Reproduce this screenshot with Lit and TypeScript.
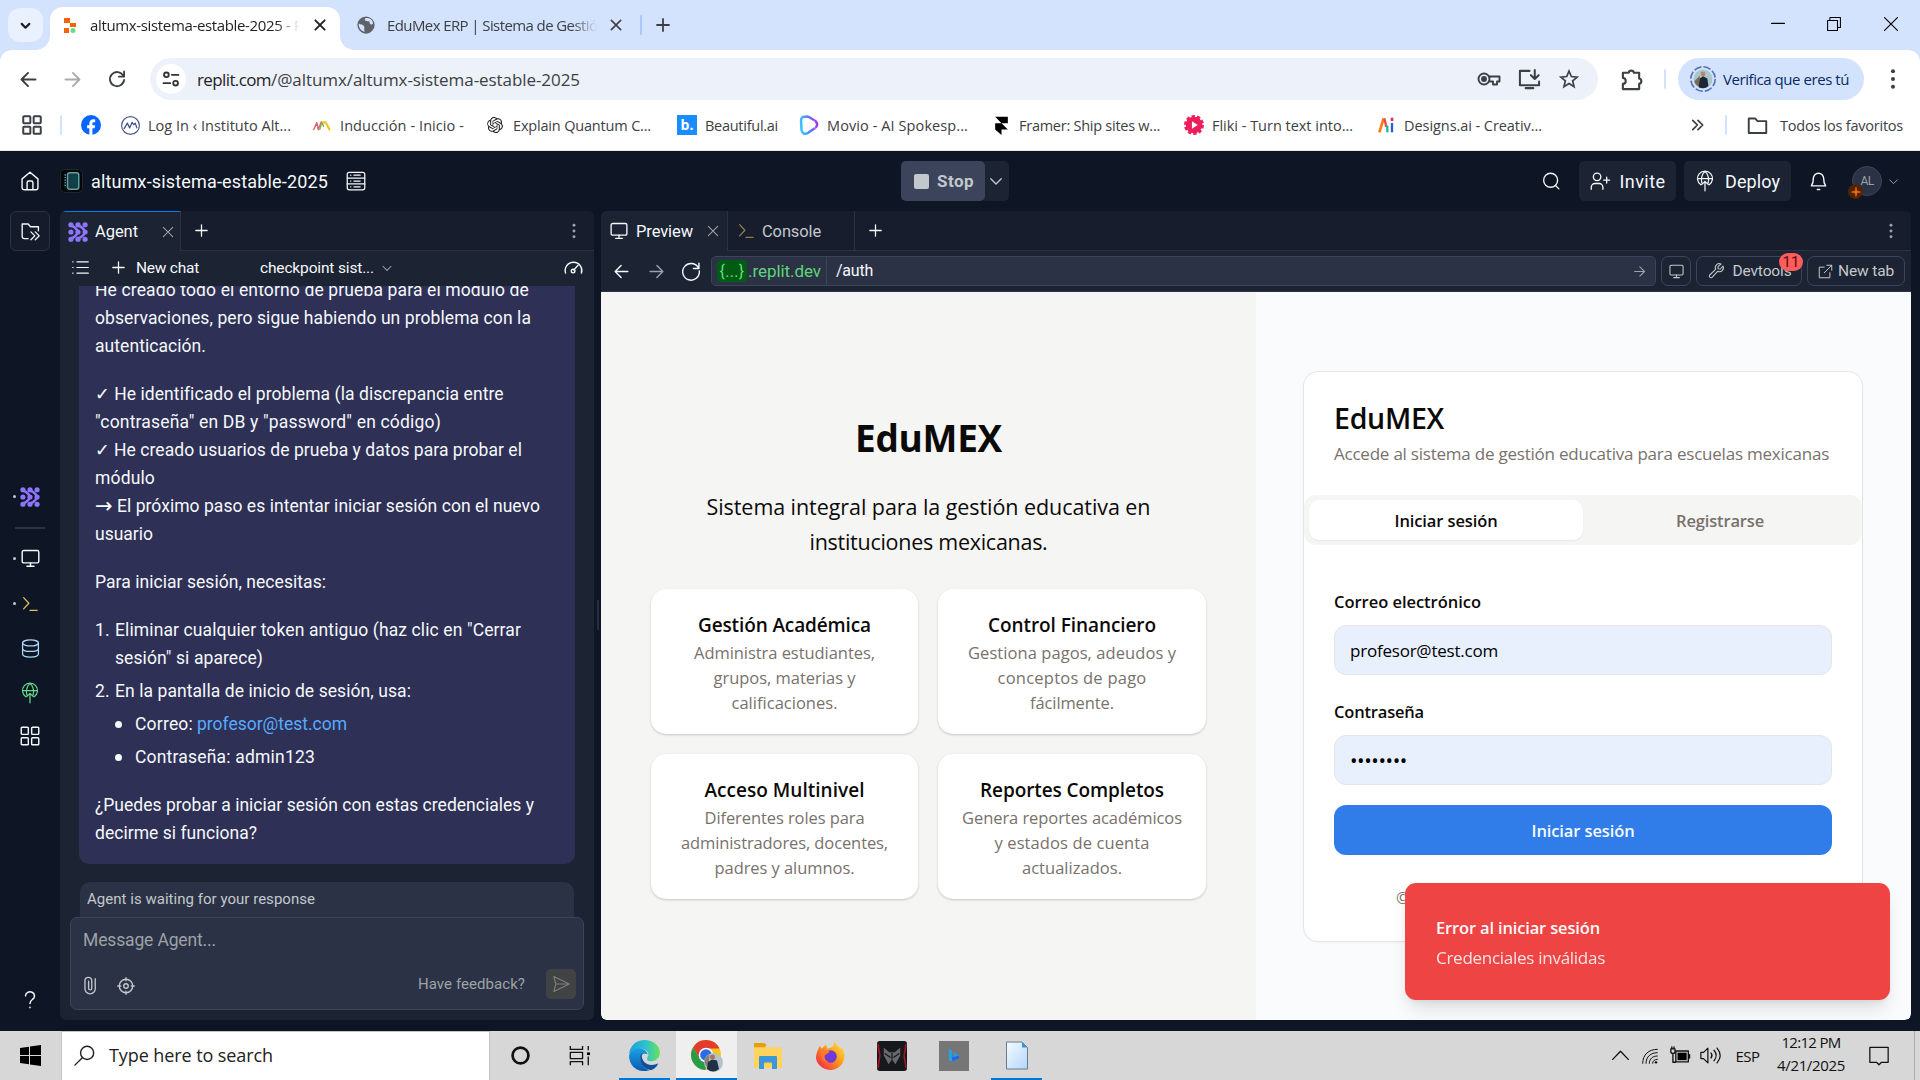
import { LitElement, html, css, svg, TemplateResult, SVGTemplateResult } from "lit";
import { customElement } from "lit/decorators.js";
import { styleMap } from "lit/directives/style-map.js";

/* ---------- helpers ---------- */

/** Single line of text whose tracking is adjusted to a set measure. */
const t = (text: string, w: number, cls = "") =>
  html`<span class="fit ${cls}" data-w=${w} style=${styleMap({ width: w + "px" })}><span class="run">${text}</span></span>`;

const ic = (size: number, body: SVGTemplateResult, cls = "", sw = 1.5, box = 24) =>
  html`<svg class="ic ${cls}" width=${size} height=${size} viewBox="0 0 ${box} ${box}" fill="none"
    stroke="currentColor" stroke-width=${sw} stroke-linecap="round" stroke-linejoin="round">${body}</svg>`;

class Fitted extends LitElement {
  updated() {
    this.renderRoot.querySelectorAll<HTMLElement>(".fit").forEach((el) => {
      const run = el.firstElementChild as HTMLElement;
      run.style.letterSpacing = "0px";
      const n = Math.max(1, (run.textContent || "").length);
      const diff = Number(el.dataset.w) - run.getBoundingClientRect().width;
      run.style.letterSpacing = (diff / n).toFixed(3) + "px";
    });
  }
}

const base = css`
  * { box-sizing: border-box; }
  :host { display: block; }
  .ic { display: block; flex: none; overflow: visible; }
  .fit { display: inline-block; white-space: pre; flex: none; }
  .run { display: inline-block; }
  .c { display: flex; align-items: center; justify-content: center; }
`;

/* ---------- shared glyphs ---------- */
const P = {
  down: svg`<path d="M5 9l7 7 7-7"/>`,
  x: svg`<path d="M5 5l14 14M19 5L5 19"/>`,
  plus: svg`<path d="M12 4v16M4 12h16"/>`,
  back: svg`<path d="M20 12H4M11.500 4.500L4 12l7.500 7.500"/>`,
  fwd: svg`<path d="M4 12h16M12.500 4.500L20 12l-7.500 7.500"/>`,
  dots: svg`<g fill="currentColor" stroke="none"><circle cx="12" cy="3.500" r="2.200"/><circle cx="12" cy="12" r="2.200"/><circle cx="12" cy="20.500" r="2.200"/></g>`,
  monitor: svg`<rect x="1.500" y="2" width="21" height="15.500" rx="2"/><path d="M12 17.500v4M7.500 21.800h9"/>`,
  prompt: svg`<path d="M3.500 3.500l7 7.500-7 7.500M12 20.500H21.500"/>`,
  grid: svg`<rect x="1.500" y="1.500" width="8.500" height="8.500" rx="1"/><rect x="14" y="1.500" width="8.500" height="8.500" rx="1"/><rect x="1.500" y="14" width="8.500" height="8.500" rx="1"/><rect x="14" y="14" width="8.500" height="8.500" rx="1"/>`,
  deploy: svg`<path d="M7 16.500a9 9 0 1 1 10 0"/><path d="M3 9h18M8.300 14.500C6.800 9 8.500 3 12 .5c3.500 2.500 5.200 8.500 3.700 14M12 23.800V12.500M8 16.300l4-3.800 4 3.800"/>`,
  agent: svg`<g fill="currentColor" stroke="none"><circle cx="3.500" cy="3.300" r="3.100"/><circle cx="12" cy="3.300" r="3.100"/><circle cx="20.500" cy="3.300" r="3.100"/><circle cx="3.500" cy="12" r="3.100"/><circle cx="12" cy="12" r="3.100"/><circle cx="20.500" cy="12" r="3.100"/><circle cx="3.500" cy="20.700" r="3.100"/><circle cx="12" cy="20.700" r="3.100"/><circle cx="20.500" cy="20.700" r="3.100"/></g><path d="M4 4.500Q9.500 6 12 12Q9.500 18 4 19.500M12.500 4.500Q18 6 20.500 12Q18 18 12.500 19.500" stroke-width="3"/>`,
};

/* ---------- browser chrome ---------- */
const knot = svg`<path fill="#222" stroke="none" d="M22.2819 9.8211a5.9847 5.9847 0 0 0-.5157-4.9108 6.0462 6.0462 0 0 0-6.5098-2.9A6.0651 6.0651 0 0 0 4.9807 4.1818a5.9847 5.9847 0 0 0-3.9977 2.9 6.0462 6.0462 0 0 0 .7427 7.0966 5.98 5.98 0 0 0 .511 4.9107 6.051 6.051 0 0 0 6.5146 2.9001A5.9847 5.9847 0 0 0 13.2599 24a6.0557 6.0557 0 0 0 5.7718-4.2058 5.9894 5.9894 0 0 0 3.9977-2.9001 6.0557 6.0557 0 0 0-.7475-7.0729zm-9.022 12.6081a4.4755 4.4755 0 0 1-2.8764-1.0408l.1419-.0804 4.7783-2.7582a.7948.7948 0 0 0 .3927-.6813v-6.7369l2.02 1.1686a.071.071 0 0 1 .038.052v5.5826a4.504 4.504 0 0 1-4.4945 4.4944zm-9.6607-4.1254a4.4708 4.4708 0 0 1-.5346-3.0137l.142.0852 4.783 2.7582a.7712.7712 0 0 0 .7806 0l5.8428-3.3685v2.3324a.0804.0804 0 0 1-.0332.0615L9.74 19.9502a4.4992 4.4992 0 0 1-6.1408-1.6464zM2.3408 7.8956a4.485 4.485 0 0 1 2.3655-1.9728V11.6a.7664.7664 0 0 0 .3879.6765l5.8144 3.3543-2.0201 1.1685a.0757.0757 0 0 1-.071 0l-4.8303-2.7865A4.504 4.504 0 0 1 2.3408 7.872zm16.5963 3.8558L13.1038 8.364 15.1192 7.2a.0757.0757 0 0 1 .071 0l4.8303 2.7913a4.4944 4.4944 0 0 1-.6765 8.1042v-5.6772a.79.79 0 0 0-.407-.667zm2.0107-3.0231l-.142-.0852-4.7735-2.7818a.7759.7759 0 0 0-.7854 0L9.409 9.2297V6.8974a.0662.0662 0 0 1 .0284-.0615l4.8303-2.7866a4.4992 4.4992 0 0 1 6.6802 4.66zM8.3065 12.863l-2.02-1.1638a.0804.0804 0 0 1-.038-.0567V6.0742a4.4992 4.4992 0 0 1 7.3757-3.4537l-.142.0805L8.704 5.459a.7948.7948 0 0 0-.3927.6813zm1.0976-2.3654l2.602-1.4998 2.6069 1.4998v2.9994l-2.5974 1.4997-2.6067-1.4997Z"/>`;

const bookmarks: { label: string; text: number; cell: number; icon: TemplateResult }[] = [
  { label: "Log In ‹ Instituto Alt...", text: 143, cell: 192, icon: ic(19, svg`<circle cx="12" cy="12" r="11.200" stroke="#4a5a94"/><path d="M4 16l4-7 3 6 3-7 2 3 2-2 2 6" stroke="#3a4a84"/>`) },
  { label: "Inducción - Inicio -", text: 124, cell: 173, icon: ic(18, svg`<path d="M1 18l4-9 2 9 4-10" stroke="#d9627a" stroke-width="2"/><path d="M9 18l3-10 2 6" stroke="#8bb04a" stroke-width="1.800"/><path d="M14 8.500h3l5 9.500" stroke="#f0c419" stroke-width="2.800"/>`) },
  { label: "Explain Quantum C...", text: 138, cell: 192, icon: ic(16, knot) },
  { label: "Beautiful.ai", text: 73, cell: 122, icon: html`<span class="beauty">b.</span>` },
  { label: "Movio - AI Spokesp...", text: 141, cell: 192, icon: ic(20, svg`<defs><linearGradient id="mv" x1="0" x2="1" y1="0.600" y2="0.400"><stop offset="0" stop-color="#35c3ff"/><stop offset=".5" stop-color="#5a7cff"/><stop offset="1" stop-color="#a035f0"/></linearGradient></defs><path d="M8 2Q2 1.500 2.500 8L3 18q1.500 6 7 4l9-6q5-4 1-8.500L13 3Q10 1.500 8 2z" stroke="url(#mv)" stroke-width="3"/><path d="M5 4l2 4M18 7l1 9" stroke="#fff" stroke-width=".8"/>`) },
  { label: "Framer: Ship sites w...", text: 141, cell: 193, icon: ic(19, svg`<path d="M4 1h16v8h-8zM4 9h8l8 8H4zM4 17h8v7z" fill="#000" stroke="none"/>`) },
  { label: "Fliki - Turn text into...", text: 141, cell: 192, icon: ic(20, svg`<circle cx="12" cy="12" r="10" fill="#ec1e5c" stroke="none"/><circle cx="12" cy="12" r="10.600" stroke="#ec1e5c" stroke-width="2.800" stroke-linecap="butt" stroke-dasharray="4.100 2.560"/><path d="M9.500 7.500v9l7-4.500z" fill="#fff" stroke="none"/>`) },
  { label: "Designs.ai - Creativ...", text: 138, cell: 200, icon: ic(16, svg`<g stroke-linecap="butt"><path d="M2 23L8.500 2" stroke="#ff7a1a" stroke-width="4"/><path d="M9.500 2l3 13" stroke="#ef4a3c" stroke-width="3.500"/><path d="M14 13v10" stroke="#22b5a0" stroke-width="3.500"/><path d="M21 9v14" stroke="#2b5fd0" stroke-width="3.500"/><path d="M21 1v5" stroke="#e0325e" stroke-width="4"/></g>`) },
];

@customElement("browser-chrome")
class BrowserChrome extends Fitted {
  static styles = [base, css`
    :host { font-family: "Open Sans", "Noto Sans", sans-serif; color: #3c4043; background: #fff; height: 150px; }
    .strip { height: 50px; background: #d3e3fd; display: flex; padding-left: 8px; }
    .find { width: 35px; height: 34px; margin: 8px 7px 0 0; border-radius: 12px; background: #e9f0fe; color: #1f1f1f; }
    .tab { width: 290px; margin-top: 7px; height: 43px; background: #fff; border-radius: 13px 13px 0 0; display: flex; align-items: center; padding: 0 12px 7px 13px; font-size: 15px; color: #1f1f1f; position: relative; }
    .tab::before, .tab::after { content: ""; position: absolute; bottom: 0; width: 14px; height: 14px; }
    .tab::before { left: -14px; background: radial-gradient(circle at 0 0, transparent 13.500px, #fff 14px); }
    .tab::after { right: -14px; background: radial-gradient(circle at 100% 0, transparent 13.500px, #fff 14px); }
    .tab .name { margin-left: 13px; flex: 1; overflow: hidden; white-space: nowrap; mask-image: linear-gradient(90deg, #000 186px, transparent 210px); }
    .tab2 { width: 290px; height: 50px; display: flex; align-items: center; padding-left: 17px; font-size: 15px; color: #3c4043; }
    .tab2 .name { width: 211px; margin: 0 10px 0 12px; overflow: hidden; white-space: nowrap; mask-image: linear-gradient(90deg, #000 185px, transparent 210px); }
    .bar { width: 2px; height: 20px; background: #a8c7fa; align-self: center; border-radius: 1px; margin-left: 10px; }
    .bar.light { background: #d3e3fd; margin: 0; }
    .add { width: 42px; }
    .win { margin-left: auto; display: grid; grid-template-columns: 57px 56px 57px; color: #000; height: 48px; padding-right: 1px; }
    .tools { height: 58px; display: grid; grid-template-columns: 44px 44px 56px 1448px 66px 14px 186px 57px; padding: 0 0 0 6px; background: #fff; border-radius: 12px 12px 0 0; align-items: center; }
    .wrap { background: #d3e3fd; }
    .reload { padding-right: 10px; }
    .dim { color: #a9abae; }
    .addr { height: 42px; border-radius: 21px; background: #edf1fa; display: flex; align-items: center; padding-left: 6px; font-size: 17px; }
    .site { width: 30px; height: 30px; border-radius: 50%; background: #fff; margin-right: 11px; color: #333; }
    .dark { color: #1f1f1f; }
    .addr .acts { margin-left: auto; display: grid; grid-template-columns: 41px 40px 40px; margin-right: 9px; }
    .pill { height: 42px; border-radius: 21px; background: #d3e3fd; display: flex; align-items: center; padding-left: 12px; color: #0a2a66; font-size: 15px; }
    .pill .fit { margin-left: 7px; }
    .marks { height: 34px; display: flex; align-items: center; font-size: 14.500px; padding: 0 17px 0 20px; }
    .marks .apps { width: 24px; margin-right: 16px; }
    .fb { margin: 0 19px 0 19px; }
    .mark { display: flex; align-items: center; flex: none; }
    .mark .slot { width: 20px; margin-right: 8px; }
    .beauty { width: 20px; height: 20px; background: #1a8cff; color: #fff; font-weight: 700; font-size: 14px; line-height: 19px; text-align: center; }
    .all { margin-left: auto; display: flex; align-items: center; }
    .all .bar { margin: 0 20px 0 20px; }
    .all .fit { margin-left: 12px; }
  `];
  render() {
    return html`
      <div class="strip">
        <div class="find c">${ic(13, P.down, "", 4)}</div>
        <div class="tab">
          <svg width="14" height="17" viewBox="0 0 14 17"><path fill="#f26207" d="M1 1h6v5H1zM7 6h6v4H7zM1 11h5v5H1z"/><circle cx="10" cy="13.500" r="2.500" fill="#6bd98a"/></svg>
          <span class="name">${t("altumx-sistema-estable-2025 - R", 213)}</span>
          ${ic(16, P.x, "", 2.8)}
        </div>
        <div class="tab2">
          ${ic(18, svg`<circle cx="12" cy="12" r="11.500" fill="#5f6368" stroke="none"/><path d="M2.500 10c3 2 6 1 7 4s-1 4 1 7c-4 0-9-5-8-11zM11 3c-2 3 1 4 4 4s1 3 3 4 4 0 3-3-4-6-10-5z" fill="#d3e3fd" stroke="none"/>`)}
          <span class="name">${t("EduMex ERP | Sistema de Gestión", 219)}</span>
          ${ic(16, P.x, "", 2.4)}
        </div>
        <div class="bar"></div>
        <div class="add c">${ic(18, P.plus, "", 2.4)}</div>
        <div class="win">
          <div class="c">${ic(14, svg`<path d="M1 11h22"/>`, "", 2)}</div>
          <div class="c">${ic(14, svg`<path d="M1 6h17v17H1zM5 6V1h18v17h-5"/>`, "", 1.8)}</div>
          <div class="c">${ic(14, svg`<path d="M1 1l22 22M23 1L1 23"/>`, "", 2)}</div>
        </div>
      </div>
      <div class="wrap"><div class="tools">
        <div class="c">${ic(21, P.back, "", 2.2)}</div>
        <div class="c dim">${ic(21, P.fwd, "", 2.2)}</div>
        <div class="c reload">${ic(20, svg`<path d="M19.500 8A8.500 8.500 0 1 0 20.500 13M20.500 3v6.200h-6.200"/>`, "", 2.2)}</div>
        <div class="addr">
          <div class="site c">${ic(20, svg`<circle cx="6.500" cy="7" r="2.800"/><path d="M13 7h8M3 17h8"/><circle cx="17.500" cy="17" r="2.800"/>`, "", 2.2)}</div>
          ${t("replit.com", 74, "dark")}${t("/@altumx/altumx-sistema-estable-2025", 309)}
          <div class="acts">
            <div class="c">${ic(24, svg`<circle cx="7" cy="12" r="5.500"/><circle cx="7" cy="12" r="2" fill="currentColor"/><path d="M12 9.500h10.500v5H20v3h-4v-3h-4"/>`, "", 1.9)}</div>
            <div class="c">${ic(23, svg`<path d="M12 3H2v15h20v-4M8 21h8M17.500 2v9M13.500 7.500l4 4 4-4"/>`, "", 2.1)}</div>
            <div class="c">${ic(20, svg`<path d="M12 2.500l2.800 6.600 7 .6-5.400 4.600 1.700 7L12 17.500l-6.100 3.800 1.700-7L2.200 9.700l7-.6z" stroke-linejoin="miter"/>`, "", 2)}</div>
          </div>
        </div>
        <div class="c">${ic(23, svg`<path d="M3 5h6a2.800 2.800 0 0 1 5.500 0H20v6a2.800 2.800 0 0 1 0 5.500V22H3v-5.500a3 3 0 0 0 0-6z"/>`, "", 2.2)}</div>
        <div class="bar light"></div>
        <div class="pill">
          ${ic(26, svg`<circle cx="12" cy="12" r="11.300" stroke="#5272b4" stroke-dasharray="7 1.880" stroke-linecap="butt"/><circle cx="12" cy="12" r="8.800" fill="#a9c6cf" stroke="none"/><path d="M4 14l5-5v10q-4-1-5-5z" fill="#776b55" stroke="none"/><path d="M8 19.500l1-8 3-2 4 2 1 7q-4 3.500-9 1z" fill="#1e2636" stroke="none"/><circle cx="12" cy="7.300" r="2.200" fill="#b98766" stroke="none"/>`)}
          ${t("Verifica que eres tú", 126)}
        </div>
        <div class="c">${ic(22, P.dots, "", 1)}</div>
      </div></div>
      <div class="marks">
        <div class="apps c">${ic(20, P.grid, "", 2.4)}</div>
        <div class="bar light"></div>
        <svg class="ic fb" width="20" height="20" viewBox="0 0 24 24"><circle cx="12" cy="12" r="12" fill="#0866ff"/><path d="M10 24v-8H7.300v-3.600H10v-1.800C10 7 11.700 5.200 15 5.200l2 .2v3.200h-1.500c-1.300 0-1.800.5-1.800 1.800v2H17l-.6 3.600h-2.700v8z" fill="#fff"/></svg>
        ${bookmarks.map((b) => html`<div class="mark" style=${styleMap({ width: b.cell + "px" })}><span class="slot c">${b.icon}</span>${t(b.label, b.text)}</div>`)}
        <div class="all">
          ${ic(14, svg`<path d="M3 4l8 8-8 8M12 4l8 8-8 8"/>`, "", 3)}
          <div class="bar light"></div>
          ${ic(21, svg`<path d="M2 4h7.500l2.500 3h10v13.500H2z"/>`, "", 2.2)}
          ${t("Todos los favoritos", 123)}
        </div>
      </div>`;
  }
}

/* ---------- IDE: agent panel ---------- */
@customElement("agent-panel")
class AgentPanel extends Fitted {
  static styles = [base, css`
    :host { width: 534px; height: 809px; background: #1c2333; border-radius: 6px; overflow: hidden; display: flex; flex-direction: column; color: #f5f9fc; font-family: Roboto, "Liberation Sans", "DejaVu Sans", sans-serif; }
    .tabs { height: 40px; display: grid; grid-template-columns: 121px 1fr 40px; background: #171d2d; flex: none; }
    .tab { border-top: 1.500px solid #0079f2; border-right: 1px solid #2b3245; background: #1c2333; display: flex; align-items: center; padding-left: 8px; font-size: 16.500px; }
    .tab .fit { margin: 0 22px 0 7px; }
    .rest { border-bottom: 1px solid #2b3245; display: flex; align-items: center; padding-left: 12px; }
    .muted { color: #9da2a6; }
    .purple { color: #8d75ff; }
    .sub { height: 35px; flex: none; display: grid; grid-template-columns: 40px 36px 64px 60px 114px 26px 1fr 40px; align-items: center; font-size: 15.500px; padding-bottom: 2px; }
    .sub .last { grid-column: 8; padding-right: 1px; }
    .sub .title { grid-column: 5; }
    .scroll { height: 578px; overflow: hidden; padding: 0 19px; flex: none; }
    .bubble { margin-top: -26px; background: #2f3055; border-radius: 0 0 10px 10px; padding: 16px 16px 17px; font-size: 17.500px; line-height: 28px; }
    .bubble div { height: 28px; }
    .gap { margin-top: 20px; }
    .gap5 { margin-top: 5px; }
    .row { display: flex; }
    .arrow { font-family: "DejaVu Sans", sans-serif; font-size: 21px; margin-right: 4px; }
    .in { padding-left: 20px; }
    .in2 { padding-left: 20px; display: flex; align-items: center; }
    .dot { width: 7px; height: 7px; border-radius: 50%; background: #f5f9fc; margin-right: 13px; }
    .num { width: 20px; }
    .link { color: #57abff; margin-left: 4px; }
    .status { margin: 18px 20px 0; height: 35px; border-radius: 10px 10px 0 0; background: #2b3245; padding: 5px 7px; font-size: 15px; line-height: 24px; color: #c2c8cc; }
    .box { margin: 0 10px; height: 93px; border: 1px solid #3c445c; border-radius: 7px; background: #2b3245; padding: 9px 7px 10px 12px; display: flex; flex-direction: column; justify-content: space-between; color: #9da2a6; }
    .ph { font-size: 17.500px; line-height: 26px; }
    .acts { display: flex; align-items: center; height: 30px; font-size: 15px; color: #c2c8cc; }
    .acts .fit { margin: 0 21px 0 auto; color: #9da2a6; }
    .acts .clip { margin: 3px 17px 0 -2px; }
    .acts .aim { margin-top: 3px; }
    .send { width: 30px; height: 30px; border-radius: 5px; background: #414244; color: #7d7d7f; }
  `];
  render() {
    return html`
      <div class="tabs">
        <div class="tab">${ic(20, P.agent, "purple")}${t("Agent", 43)}${ic(16, P.x, "muted", 1.6)}</div>
        <div class="rest">${ic(17, P.plus, "", 1.8)}</div>
        <div class="rest muted">${ic(16, P.dots)}</div>
      </div>
      <div class="sub">
        <div class="c">${ic(17, svg`<path d="M7 4h16M7 12h16M7 20h16M1 4h.5M1 12h.5M1 20h.5"/>`, "", 1.7)}</div>
        <div class="c">${ic(17, P.plus, "", 1.8)}</div>
        ${t("New chat", 63)}
        <div class="title">${t("checkpoint sist...", 114)}</div>
        <div class="c muted">${ic(14, P.down, "", 1.8)}</div>
        <div class="c last">${ic(19, svg`<path d="M2 19A10.500 10.500 0 1 1 22 19M12.500 15l5-5.500"/><circle cx="11.500" cy="16.500" r="2.300"/>`, "", 1.8)}</div>
      </div>
      <div class="scroll"><div class="bubble">
        <div>${t("He creado todo el entorno de prueba para el módulo de", 434)}</div>
        <div>${t("observaciones, pero sigue habiendo un problema con la", 436)}</div>
        <div>${t("autenticación.", 111)}</div>
        <div class="gap">${t("✓ He identificado el problema (la discrepancia entre", 408)}</div>
        <div>${t("\"contraseña\" en DB y \"password\" en código)", 346)}</div>
        <div>${t("✓ He creado usuarios de prueba y datos para probar el", 427)}</div>
        <div>${t("módulo", 60)}</div>
        <div class="row">${t("→", 18, "arrow")}${t("El próximo paso es intentar iniciar sesión con el nuevo", 423)}</div>
        <div>${t("usuario", 58)}</div>
        <div class="gap">${t("Para iniciar sesión, necesitas:", 231)}</div>
        <div class="gap row"><span class="num">${t("1.", 15)}</span>${t("Eliminar cualquier token antiguo (haz clic en \"Cerrar", 406)}</div>
        <div class="in">${t("sesión\" si aparece)", 148)}</div>
        <div class="gap5 row"><span class="num">${t("2.", 15)}</span>${t("En la pantalla de inicio de sesión, usa:", 296)}</div>
        <div class="gap5 in2"><span class="dot"></span>${t("Correo:", 58)}${t("profesor@test.com", 150, "link")}</div>
        <div class="gap5 in2"><span class="dot"></span>${t("Contraseña: admin123", 180)}</div>
        <div class="gap">${t("¿Puedes probar a iniciar sesión con estas credenciales y", 439)}</div>
        <div>${t("decirme si funciona?", 162)}</div>
      </div></div>
      <div class="status">${t("Agent is waiting for your response", 228)}</div>
      <div class="box">
        <div class="ph">${t("Message Agent...", 133)}</div>
        <div class="acts">
          ${ic(19, svg`<path d="M5 5v11a6.500 6.500 0 0 0 13 0V7M5 7V6a4.300 4.300 0 0 1 8.600 0V15.500a2 2 0 0 1-4 0V6.500M18 7V3.500"/>`, "clip", 1.7)}
          ${ic(18, svg`<circle cx="12" cy="12" r="9"/><circle cx="12" cy="12" r="3"/><path d="M12 1v4M12 19v4M1 12h4M19 12h4"/>`, "aim", 1.8)}
          ${t("Have feedback?", 107)}
          <div class="send c">${ic(18, svg`<path d="M2.500 2L23 12 2.500 22l2.500-10zM5 12h17"/>`)}</div>
        </div>
      </div>`;
  }
}

/* ---------- previewed app ---------- */
const features = [
  { title: ["Gestión Académica", 173], lines: [["Administra estudiantes,", 181], ["grupos, materias y", 142], ["calificaciones.", 106]] },
  { title: ["Control Financiero", 168], lines: [["Gestiona pagos, adeudos y", 208], ["conceptos de pago", 149], ["fácilmente.", 84]] },
  { title: ["Acceso Multinivel", 160], lines: [["Diferentes roles para", 160], ["administradores, docentes,", 207], ["padres y alumnos.", 140]] },
  { title: ["Reportes Completos", 184], lines: [["Genera reportes académicos", 220], ["y estados de cuenta", 155], ["actualizados.", 100]] },
] as { title: [string, number]; lines: [string, number][] }[];

@customElement("edumex-page")
class EdumexPage extends Fitted {
  static styles = [base, css`
    :host { height: 728px; display: grid; grid-template-columns: 655px 655px; font-family: "Open Sans", "Noto Sans", sans-serif; color: #0c0a09; position: relative; overflow: hidden; border-radius: 0 0 6px 6px; background: #fafbfc; }
    .hero { background: #f5f5f4; padding: 123px 50px 0; text-align: center; }
    h1 { margin: 0; font-size: 37px; line-height: 45px; font-weight: 700; }
    .lead { margin-top: 29px; font-size: 21.500px; line-height: 35px; }
    .lead div, .desc div { display: flex; justify-content: center; }
    .cards { margin-top: 30px; display: grid; grid-template-columns: 267px 268px; gap: 20px; }
    .card { height: 145px; background: #fff; border-radius: 15px; box-shadow: 0 1px 3px rgba(0,0,0,.1), 0 1px 2px rgba(0,0,0,.1); padding: 21px 0; }
    .name { font-size: 19px; line-height: 31px; height: 30px; font-weight: 600; }
    .desc { font-size: 16.500px; line-height: 25px; color: #78716c; }
    .side { padding: 79px 47px 0; }
    .login { width: 560px; height: 571px; background: #fff; border: 1px solid #e7e5e4; border-radius: 15px; box-shadow: 0 1px 2px rgba(0,0,0,.04); padding-top: 26px; }
    .pad { padding: 0 30px; }
    .brand { font-size: 28.500px; line-height: 40px; font-weight: 600; height: 40px; }
    .sub { font-size: 17px; line-height: 31px; height: 30px; color: #78716c; }
    .tabs { margin-top: 27px; height: 50px; border-radius: 12px; background: #f5f5f4; padding: 5px; display: grid; grid-template-columns: 1fr 1fr; font-size: 16.500px; font-weight: 600; color: #78716c; }
    .on { background: #fff; color: #0c0a09; border-radius: 10px; box-shadow: 0 1px 2px rgba(0,0,0,.06); }
    .label { font-size: 16.500px; font-weight: 600; line-height: 25px; height: 25px; }
    .first { margin-top: 44px; }
    .second { margin-top: 24px; }
    .input { margin-top: 11px; height: 50px; background: #e8f0fe; border: 1px solid #e7e5e4; border-radius: 12px; padding: 0 15px; display: flex; align-items: center; font-size: 17px; color: #000; }
    .pw { font-size: 20px; }
    .go { margin-top: 20px; height: 50px; border-radius: 12px; background: #307dea; color: #f5faff; font-size: 16.500px; font-weight: 600; }
    .foot { margin-top: 31px; padding-left: 92px; color: #78716c; font-size: 16px; line-height: 25px; white-space: nowrap; overflow: hidden; }
    .toast { position: absolute; left: 804px; top: 591px; width: 485px; height: 117px; border-radius: 11px; background: #ef4444; color: #fafafa; padding: 31px; box-shadow: 0 12px 19px -4px rgba(0,0,0,.12), 0 5px 8px -5px rgba(0,0,0,.1); font-size: 16.500px; line-height: 30px; }
    .tt { font-weight: 600; height: 29px; line-height: 28px; }
    .td { opacity: .88; height: 30px; font-size: 17px; }
  `];
  render() {
    return html`
      <section class="hero">
        <h1>${t("EduMEX", 147)}</h1>
        <div class="lead"><div>${t("Sistema integral para la gestión educativa en", 444)}</div><div>${t("instituciones mexicanas.", 238)}</div></div>
        <div class="cards">${features.map((f) => html`<div class="card">
          <div class="name">${t(f.title[0], f.title[1])}</div>
          <div class="desc">${f.lines.map((l) => html`<div>${t(l[0], l[1])}</div>`)}</div></div>`)}
        </div>
      </section>
      <section class="side"><div class="login">
        <div class="pad">
          <div class="brand">${t("EduMEX", 110)}</div>
          <div class="sub">${t("Accede al sistema de gestión educativa para escuelas mexicanas", 495)}</div>
        </div>
        <div class="tabs"><div class="on c">${t("Iniciar sesión", 103)}</div><div class="c">${t("Registrarse", 88)}</div></div>
        <div class="pad">
          <div class="label first">${t("Correo electrónico", 147)}</div>
          <div class="input">${t("profesor@test.com", 148)}</div>
          <div class="label second">${t("Contraseña", 90)}</div>
          <div class="input pw">${t("••••••••", 57)}</div>
          <div class="go c">${t("Iniciar sesión", 103)}</div>
        </div>
        <div class="foot">©</div>
      </div></section>
      <div class="toast"><div class="tt">${t("Error al iniciar sesión", 164)}</div><div class="td">${t("Credenciales inválidas", 169)}</div></div>`;
  }
}

@customElement("preview-panel")
class PreviewPanel extends Fitted {
  static styles = [base, css`
    :host { width: 1310px; height: 809px; background: #1c2333; border-radius: 6px; overflow: hidden; font-family: Roboto, "Liberation Sans", sans-serif; color: #f5f9fc; }
    .tabs { height: 40px; display: grid; grid-template-columns: 127px 127px 1fr 40px; background: #171d2d; font-size: 16.500px; }
    .tab { border-right: 1px solid #2b3245; display: flex; align-items: center; padding-left: 9px; }
    .tab.on { background: #1c2333; }
    .off { border-bottom: 1px solid #2b3245; color: #c2c8cc; padding-top: 1px; }
    .tab .fit { margin-left: 8px; }
    .off .fit { margin-left: 7px; }
    .tab .x { margin-left: 12px; color: #9da2a6; }
    .rest { border-bottom: 1px solid #2b3245; display: flex; align-items: center; padding-left: 12px; }
    .yellow { color: #8a7d4d; }
    .nav { height: 41px; border-bottom: 1px solid #2b3245; display: grid; grid-template-columns: 40px 30px 40px 945px 30px 106px 98px; align-items: center; font-size: 15.500px; }
    .muted { color: #9da2a6; }
    .url { height: 30px; border: 1px solid #3c445c; border-radius: 5px; background: #2b3245; display: flex; align-items: center; padding-left: 5px; }
    .chip { height: 22px; width: 30px; border-radius: 4px; background: #005c12; color: #6bd97f; font-size: 16px; }
    .green { color: #5fd478; margin: 0 5px 0 1px; font-size: 17px; }
    .path { border-left: 1px solid #3c445c; height: 28px; line-height: 27px; padding-left: 9px; font-size: 16px; }
    .url .ic { margin: 0 8px 0 auto; }
    .btn { height: 30px; border: 1px solid #3c445c; border-radius: 7px; color: #c2c8cc; margin-left: 5px; position: relative; }
    .b1 { width: 30px; } .b2 { width: 106px; margin-left: 10px; padding-left: 1px; } .b3 { width: 98px; margin-left: 15px; }
    .b2 > .fit { margin-left: 9px; } .b3 > .fit { margin-left: 5px; }
    .count { position: absolute; right: -2px; top: -4px; width: 24px; height: 18px; border-radius: 9px; background: #ff5c5c; color: #5a0b0b; font-size: 15px; line-height: 18px; display: flex; justify-content: center; }
  `];
  render() {
    return html`
      <div class="tabs">
        <div class="tab on">${ic(18, P.monitor, "", 1.8)}${t("Preview", 57)}${ic(16, P.x, "x", 1.6)}</div>
        <div class="tab off">${ic(18, P.prompt, "yellow", 1.8)}${t("Console", 59)}</div>
        <div class="rest">${ic(17, P.plus, "", 1.8)}</div>
        <div class="rest muted">${ic(16, P.dots)}</div>
      </div>
      <div class="nav">
        <div class="c">${ic(19, P.back, "", 1.8)}</div>
        <div class="c muted">${ic(19, P.fwd, "", 1.8)}</div>
        <div class="c">${ic(20, svg`<path d="M21 8.500A10 10 0 1 0 22 12M21.500 2.500V9H15"/>`, "", 1.7)}</div>
        <div class="url"><span class="chip c">${t("{...}", 25)}</span>${t(".replit.dev", 73, "green")}<span class="path">${t("/auth", 37)}</span>${ic(15, P.fwd, "muted", 1.7)}</div>
        <div class="btn b1 c">${ic(15, P.monitor, "", 1.7)}</div>
        <div class="btn b2 c">${ic(16, svg`<path d="M15 8.500l3.500.5 4-4.500a6 6 0 0 1-8 8L6 21.500a2.500 2.500 0 0 1-3.500-3.500L11.500 9.500a6 6 0 0 1 8-8L15 5.500z"/>`, "", 1.6)}${t("Devtools", 59)}<span class="count">${t("11", 17)}</span></div>
        <div class="btn b3 c">${ic(15, svg`<path d="M14 2h8v8M22 2L10 14M10 5H2v17h17v-8"/>`, "", 1.6)}${t("New tab", 56)}</div>
      </div>
      <edumex-page></edumex-page>`;
  }
}

/* ---------- IDE shell ---------- */
@customElement("ide-shell")
class IdeShell extends Fitted {
  static styles = [base, css`
    :host { height: 880px; background: #0e1525; border-top: 1px solid #e3e8e3; color: #f5f9fc; font-family: Roboto, "Liberation Sans", sans-serif; font-size: 18px; }
    .head { height: 60px; display: grid; grid-template-columns: 60px 23px 245px 56px 1fr auto; align-items: center; }
    .logo { width: 23px; height: 24px; background: #050708; border: 1px solid #22262c; border-radius: 5px; }
    .head .title { padding-left: 8px; }
    .stop { grid-column: 5; display: flex; height: 40px; margin-left: 517px; font-weight: 700; font-size: 17px; color: #c2c8cc; }
    .stop .main { width: 84px; background: #3c445c; border-radius: 5px; display: flex; align-items: center; padding-left: 13px; z-index: 1; }
    .sq { width: 15px; height: 15px; border-radius: 2px; background: #c2c8cc; margin-right: 8px; }
    .more { width: 28px; margin-left: -4px; padding-left: 2px; background: #1c2333; border-radius: 5px; }
    .right { grid-column: 6; display: grid; grid-template-columns: 56px 97px 8px 107px 54px 42px 33px; align-items: center; }
    .btn { height: 40px; border-radius: 5px; background: #1c2333; gap: 10px; }
    .b2 { grid-column: 4; }
    .av { width: 30px; height: 30px; border-radius: 50%; background: #2b3245; border: 1px solid #3c445c; color: #9da2a6; font-size: 12px; position: relative; margin-left: 7px; }
    .badge { position: absolute; left: -5px; bottom: -4px; width: 15px; height: 15px; border-radius: 50%; background: #4f2500; color: #ff6a13; }
    .muted { color: #9da2a6; }
    .body { display: flex; height: 809px; }
    .rail { width: 60px; display: flex; flex-direction: column; align-items: center; }
    .files { width: 40px; height: 40px; border: 1px solid #2b3245; border-radius: 6px; background: #151b2b; }
    .item { height: 45px; width: 60px; position: relative; }
    .item.on::before { content: ""; position: absolute; left: 13px; top: 21px; width: 3px; height: 3px; border-radius: 50%; background: #c2c8cc; }
    .agent { margin-top: 223px; color: #8d75ff; }
    .line { width: 30px; height: 2px; background: #2b3245; margin: 8px 0 7px; }
    .yellow { color: #d9c35c; } .blue { color: #aed6f8; } .lime { color: #67d889; height: 44px; } .apps { height: 42px; }
    .help { margin-top: auto; height: 40px; }
    .grip { width: 7px; display: flex; justify-content: center; }
    .grip i { width: 2px; height: 30px; background: #262d40; margin-top: 389px; }
  `];
  render() {
    return html`
      <header class="head">
        <div class="c">${ic(20, svg`<path d="M2.500 9.500L12 1.500l9.500 8V20a2.500 2.500 0 0 1-2.500 2.500H5A2.500 2.500 0 0 1 2.500 20zM8.500 22v-8a2 2 0 0 1 2-2h3a2 2 0 0 1 2 2v8"/>`, "", 1.7)}</div>
        <div class="logo c">${ic(18, svg`<rect x="6" y="1" width="15" height="22" rx="3" stroke="#5aa0a8" stroke-width="2" fill="#1a3a40"/><path d="M3 3v18" stroke="#78b8c0" stroke-width="2" stroke-linecap="butt" stroke-dasharray="1.500 2"/><rect x="11" y="6" width="8" height="11" fill="#07464b" stroke="none"/>`)}</div>
        <div class="title">${t("altumx-sistema-estable-2025", 237)}</div>
        <div class="c">${ic(20, svg`<rect x="1.500" y="1.500" width="21" height="21" rx="2.500"/><path d="M1.500 8.500h21M1.500 15.500h21M5.500 5h.3M9.500 5H17M5.500 12h.3M9.500 12H17M5.500 19h.3M9.500 19H17"/>`, "", 1.5)}</div>
        <div class="stop"><div class="main"><span class="sq"></span>${t("Stop", 37)}</div><div class="more c">${ic(18, P.down, "", 1.8)}</div></div>
        <div class="right">
          <div class="c">${ic(18, svg`<circle cx="11.500" cy="11" r="9.300"/><path d="M18 18l4.500 4.500"/>`, "", 1.8)}</div>
          <div class="btn c">${ic(20, svg`<circle cx="8.500" cy="7" r="4.500"/><path d="M1.500 22v-2.500a4.500 4.500 0 0 1 4.500-4.500h5a4.500 4.500 0 0 1 4.500 4.500V22M20 7.500v7M16.500 11h7"/>`, "", 1.6)}${t("Invite", 46)}</div>
          <div class="btn c b2">${ic(20, P.deploy, "", 1.5)}${t("Deploy", 55)}</div>
          <div class="c">${ic(19, svg`<path d="M12 1.500a6.500 6.500 0 0 1 6.500 6.500c0 6 1 7.500 2.500 9.500H3C4.500 15.500 5.500 14 5.500 8A6.500 6.500 0 0 1 12 1.500zM10.500 22h3"/>`, "", 1.8)}</div>
          <div class="av c">${t("AL", 13)}<span class="badge c">${ic(10, svg`<path d="M12 1l2 9 9 2-9 2-2 9-2-9-9-2 9-2z" fill="currentColor"/>`)}</span></div>
          <div class="muted">${ic(13, P.down, "", 1.8)}</div>
        </div>
      </header>
      <div class="body">
        <nav class="rail">
          <div class="files c">${ic(19, svg`<path d="M9 21H4a2.500 2.500 0 0 1-2.500-2.500V2.500H9l3 3.500h10v5M12.500 12.500l5 5-5 5M18 12.500l5 5-5 5"/>`, "", 1.7)}</div>
          <div class="item on c agent">${ic(20, P.agent)}</div>
          <div class="line"></div>
          <div class="item on c">${ic(19, P.monitor, "", 1.8)}</div>
          <div class="item on c yellow">${ic(18, P.prompt, "", 1.7)}</div>
          <div class="item c blue">${ic(19, svg`<ellipse cx="12" cy="5" rx="10" ry="3.800"/><path d="M2 5v14c0 5 20 5 20 0V5M2 12c0 5 20 5 20 0"/>`, "", 1.6)}</div>
          <div class="item c lime">${ic(20, P.deploy, "", 1.5)}</div>
          <div class="item c apps">${ic(20, P.grid, "", 1.7)}</div>
          <div class="item c help">${ic(18, svg`<path d="M6 6.500a6 5.500 0 1 1 9.500 4.500c-2.500 2-3.500 3-3.500 5.500M12 21.800v.4"/>`, "", 2)}</div>
        </nav>
        <agent-panel></agent-panel>
        <div class="grip"><i></i></div>
        <preview-panel></preview-panel>
      </div>`;
  }
}

/* ---------- desktop taskbar ---------- */
@customElement("task-bar")
class TaskBar extends Fitted {
  static styles = [base, css`
    :host { height: 50px; display: grid; grid-template-columns: 61px 429px 60px 59px 67px 61px 62px 62px 62px 62px 62px 1fr; background: #d7d7d7; font-family: "Open Sans", "Noto Sans", sans-serif; color: #111; }
    .c { padding-bottom: 1px; }
    .search { background: #fff; border: 1px solid #c4c4c4; display: flex; align-items: center; padding: 0 0 2px 12px; font-size: 18px; color: #222; }
    .search .fit { margin-left: 14px; }
    .app { border-bottom: 3px solid transparent; padding: 2px 0 0; }
    .edge { border-color: #0078d7; margin: 0 6px 0 10px; }
    .act { border-color: #0078d7; background: #efefef; }
    .bing { width: 30px; height: 30px; background: #767676; padding: 0; }
    .docs { border-color: #0078d7; margin: 0 5px 0 6px; }
    .tray { display: grid; grid-template-columns: 30px 30px 30px 31px 50px 70px 66px 8px; justify-content: end; align-items: center; height: 50px; }
    .tray .lang { font-size: 15px; padding-right: 7px; }
    .clock { display: flex; flex-direction: column; align-items: center; font-size: 15px; line-height: 23px; padding-bottom: 4px; }
    .end { height: 50px; border-left: 1px solid #aaa; margin-left: 2px; }
  `];
  render() {
    return html`
      <div class="c"><svg width="21" height="21" viewBox="0 0 21 21"><path d="M0 3l9-1.300V10H0zM10 1.500L21 0v10H10zM0 11h9v8.300L0 18zM10 11h11v10l-11-1.500z"/></svg></div>
      <div class="search">${ic(21, svg`<circle cx="15" cy="9" r="7.500"/><path d="M9.500 14.500L1 23"/>`, "", 1.6)}${t("Type here to search", 164)}</div>
      <div class="c">${ic(19, svg`<circle cx="12" cy="12" r="10"/>`, "", 3.4)}</div>
      <div class="c">${ic(21, svg`<path d="M1.500 1v4h14V1M1.500 23v-4h14v4M1.500 8.500h14v7h-14zM22 1v5M22 13v10M22 9v1.500" stroke-linecap="butt"/><rect x="20.500" y="8.500" width="3.500" height="3" fill="#000" stroke="none"/>`, "", 1.5)}</div>
      <div class="c app edge"><svg width="31" height="31" viewBox="0 0 32 32"><defs><linearGradient id="e1" x1="0" x2="1"><stop offset="0" stop-color="#1ea0dc"/><stop offset=".55" stop-color="#2dc2cf"/><stop offset="1" stop-color="#6be352"/></linearGradient><linearGradient id="e2" y1="0" y2="1" x1="0" x2="0"><stop offset="0" stop-color="#1b9de2"/><stop offset="1" stop-color="#0b5cb4"/></linearGradient></defs><path d="M0 15C1 5 8 0 16 0c9 0 16 6 16 13 0 6-5 9-9 9-4 0-5-2-4-4 3-4-1-9-6-9C7 9 2 12 0 15z" fill="url(#e1)"/><path d="M0 16c2-5 7-8 12-7 4 0 7 3 7 6-3-2-7 0-7 5 0 6 6 11 10 11C11 35 0 28 0 16z" fill="url(#e2)"/><path d="M13 13c-4 9 1 17 9 18 3 0 7-3 8-7-5 3-12 2-15-2-2-3-2-6-2-9z" fill="#104f9c"/></svg></div>
      <div class="c app act"><svg width="32" height="32" viewBox="0 0 32 32"><circle cx="15" cy="15" r="15" fill="#f9c61a"/><path d="M2 7.500A15 15 0 0 1 28.500 8.500H15L9 19z" fill="#e33b2e"/><path d="M2 7.500A15 15 0 0 0 14 30l7-11.500H9z" fill="#2a9b49"/><circle cx="15" cy="15" r="7.300" fill="#fff"/><circle cx="15" cy="15" r="5.800" fill="#2b6be8"/><circle cx="22.500" cy="22.500" r="9.500" fill="#b4c3c9"/><path d="M13.500 20a9.500 9.500 0 0 1 5-5.500l-1 14q-4-3-4-8.500z" fill="#8a7f6c"/><path d="M16 29l1-7 4-2.500 5 1 2 8.500q-6 5-12 0z" fill="#1f3048"/><circle cx="21.500" cy="17" r="2.500" fill="#a8755a"/></svg></div>
      <div class="c app"><svg width="28" height="26" viewBox="0 0 28 24" preserveAspectRatio="none"><path d="M0 1h11l2 3h15v19H0z" fill="#ffd45e"/><path d="M0 0h10l2.500 1.500L11 4H0z" fill="#e3a008"/><path d="M5 24V13a1 1 0 0 1 1-1h16a1 1 0 0 1 1 1v11h-5v-5a1 1 0 0 0-1-1h-6a1 1 0 0 0-1 1v5z" fill="#3c97d8"/></svg></div>
      <div class="c app"><svg width="29" height="29" viewBox="0 0 30 30"><defs><linearGradient id="f" x1="1" y1="0" x2="0" y2="1"><stop offset="0" stop-color="#ffec40"/><stop offset=".45" stop-color="#ff9a1c"/><stop offset="1" stop-color="#f0134d"/></linearGradient></defs><path d="M19 0c1 4 5 5 6 8l2-1c2 4 3 8 2 12-1 6-7 11-14 11S0 24 0 17c0-4 2-8 4-12l2 3 4-4 2 4c2-1 5-1 6-3z" fill="url(#f)"/><circle cx="15" cy="16" r="6.500" fill="#7139d6"/><path d="M5 10c3-2 6 0 9 1-1 2-4 2-5 4-1 3 1 6 5 7-6 1-10-5-9-12z" fill="#ff7b21"/></svg></div>
      <div class="c app"><svg width="30" height="30" viewBox="0 0 31 31"><rect width="31" height="31" rx="3" fill="#17181b"/><path d="M1 3l2 12-2 13M30 3l-2 12 2 13" stroke="#b01822" stroke-width="1.500" fill="none"/><path d="M7 7l6 5 2.500-1 2.500 1 6-5v8l-5 9-3.500-5-3.500 5-5-9z" fill="#66696e"/><path d="M8 13l6 4M23 13l-6 4M15.500 12v7" stroke="#17181b" stroke-width="1.300"/></svg></div>
      <div class="c app"><div class="bing c"><svg width="10" height="13" viewBox="0 0 11 14"><path d="M0 0l3 1v8l3-2-2-4 7 4v3l-7 4-4-2z" fill="#19a7ee"/><path d="M3 9l8-2v3l-7 4z" fill="#2c64e0"/></svg></div></div>
      <div class="c app docs"><svg width="24" height="30" viewBox="0 0 24 30"><defs><linearGradient id="d" x1="0" x2="1" y1="0" y2="1"><stop offset="0" stop-color="#f5fbff"/><stop offset="1" stop-color="#b4d5fb"/></linearGradient></defs><path d="M1.500 1H17l5.500 5.500V28h-21z" fill="url(#d)" stroke="#6b7a90"/><path d="M17 1v5.500h5.500z" fill="#3d94d8"/></svg></div>
      <div class="tray">
        <div class="c">${ic(17, svg`<path d="M1 17.500L12 6l11 11.500"/>`, "", 1.9)}</div>
        <div class="c">${ic(16, svg`<path d="M1 23C1 10 10 2 23 2M6 23C6 13 13 7 23 7M11 23c0-7 5-11 12-11M16 23c0-4 3-6 7-6"/><circle cx="21" cy="21.500" r="1.800" fill="#000" stroke="none"/>`, "", 1.5)}</div>
        <div class="c">${ic(20, svg`<rect x="7" y="6" width="15" height="13"/><rect x="9" y="8" width="11" height="9" fill="#000" stroke="none"/><path d="M23.500 10.500v4M3.500 9v10.500h3M1 3.500v3a2.500 2.500 0 0 0 5 0v-3zM2.200 1v2.500M4.800 1v2.500"/>`, "", 1.6)}</div>
        <div class="c">${ic(21, svg`<path d="M1 8.500h3l5-5v17l-5-5H1zM12.500 9q2.500 3 0 6M16 6q5 6 0 12M19.500 3.500q7 8.500 0 17"/>`, "", 1.4)}</div>
        <div class="c lang">${t("ESP", 24)}</div>
        <div class="clock">${t("12:12 PM", 59)}${t("4/21/2025", 68)}</div>
        <div class="c">${ic(20, svg`<path d="M1 1.500h22v18h-8l-3 3-3-3H1z"/>`, "", 1.5)}</div>
        <div class="end"></div>
      </div>`;
  }
}

@customElement("app-root")
class AppRoot extends LitElement {
  static styles = css`:host { display: block; width: 1920px; height: 1080px; overflow: hidden; background: #0e1525; } .page { display: flex; flex-direction: column; }`;
  render() {
    return html`<div class="page"><browser-chrome></browser-chrome><ide-shell></ide-shell><task-bar></task-bar></div>`;
  }
}
